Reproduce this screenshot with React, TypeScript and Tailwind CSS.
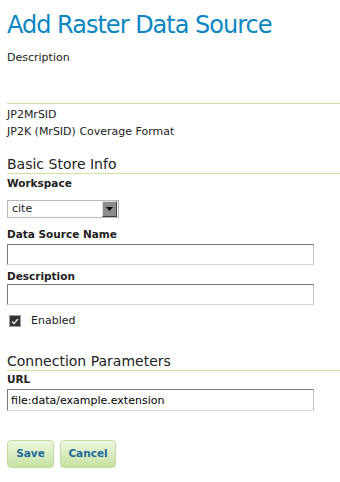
import React from "react";

const font = { fontFamily: '"DejaVu Sans", Verdana, sans-serif' };

const inputClass =
  "block h-[21px] w-[307px] border border-t-[#7b7b7b] border-l-[#7b7b7b] border-r-[#c4c4c4] border-b-[#d4d4d4] bg-white px-[3px] text-[11px] text-black outline-none";

const Label = ({ children, className = "" }: { children: React.ReactNode; className?: string }) => (
  <div className={`text-[10.5px] font-bold leading-[14px] text-[#222] ${className}`}>{children}</div>
);

const Heading = ({ children, className = "" }: { children: React.ReactNode; className?: string }) => (
  <h2 className={`border-b border-[#cde0a8] text-[14px] leading-[18px] text-[#222] ${className}`}>
    {children}
  </h2>
);

export default function App() {
  return (
    <div className="min-h-[482px] w-[340px] bg-white pl-[7px] pt-[11px] text-[#222]" style={font}>
      <h1 className="text-[24px] leading-[28px] tracking-[-1px] text-[#0a86c2]">
        Add Raster Data Source
      </h1>
      <p className="mt-[10px] border-b border-[#cde0a8] pb-[37px] text-[11px] leading-[17px]">
        Description
      </p>
      <div className="mt-[2px] text-[11px] leading-[17px]">
        <div>JP2MrSID</div>
        <div>JP2K (MrSID) Coverage Format</div>
      </div>

      <Heading className="mt-[15px]">Basic Store Info</Heading>
      <Label className="mt-[2px]">Workspace</Label>
      {/* workspace select */}
      <div className="mt-[10px] flex h-[18px] w-[112px] items-center border border-[#b9b9b9] bg-white pr-px">
        <span className="flex-1 pl-[4px] text-[11px] leading-[16px]">cite</span>
        <span className="flex h-[16px] w-[15px] items-center justify-center border border-t-[#dcdcdc] border-l-[#dcdcdc] border-r-[#404040] border-b-[#404040] bg-[#8c8c8c]">
          <svg width="7" height="4" viewBox="0 0 7 4">
            <path d="M0 0h7L3.5 4z" fill="#000" />
          </svg>
        </span>
      </div>

      <Label className="mt-[9px]">Data Source Name</Label>
      <input className={`mt-[3px] ${inputClass}`} style={font} />
      <Label className="mt-[4px]">Description</Label>
      <input className={`mt-[1px] ${inputClass}`} style={font} />

      <div className="mt-[8px] flex h-[16px] items-center">
        <span className="ml-[2px] flex h-[12px] w-[12px] items-center justify-center border border-[#a0a0a0] bg-[#333]">
          <svg width="8" height="7" viewBox="0 0 8 7">
            <path d="M1 3.5l2 2L7 1" stroke="#d8d8d8" strokeWidth="1.6" fill="none" />
          </svg>
        </span>
        <span className="ml-[10px] text-[11px] leading-[16px]">Enabled</span>
      </div>

      <Heading className="mt-[23px]">Connection Parameters</Heading>
      <Label className="mt-[1px]">URL</Label>
      <input
        className={`mt-[3px] h-[22px] ${inputClass}`}
        style={font}
        defaultValue="file:data/example.extension"
      />

      <div className="mt-[29px] flex gap-[6px]">
        <button className="h-[28px] w-[47px] rounded-[4px] border border-[#c4dd9c] bg-gradient-to-b from-[#eef7e0] to-[#c6e1a0] text-[10.5px] font-bold text-[#1a6c9c]">
          Save
        </button>
        <button className="h-[28px] w-[56px] rounded-[4px] border border-[#c4dd9c] bg-gradient-to-b from-[#eef7e0] to-[#c6e1a0] text-[10.5px] font-bold text-[#1a6c9c]">
          Cancel
        </button>
      </div>
    </div>
  );
}
